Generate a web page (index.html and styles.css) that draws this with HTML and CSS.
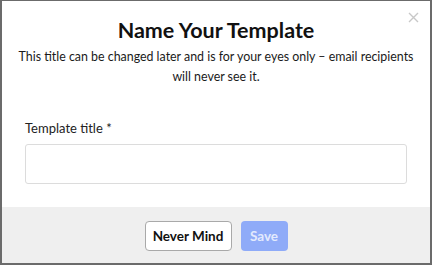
FILE: index.html
```html
<!DOCTYPE html>
<html lang="en">
<head>
    <meta charset="UTF-8">
    <meta name="viewport" content="width=device-width, initial-scale=1.0">
    <title>Name Your Template</title>
    <link rel="stylesheet" href="styles.css">
</head>
<body>
    <div class="modal">
        <button class="close-btn" aria-label="Close">
            <svg width="11" height="11" viewBox="0 0 11 11">
                <path d="M1 1 L10 10 M10 1 L1 10" stroke="#c8c8c8" stroke-width="1.4" fill="none"/>
            </svg>
        </button>

        <div class="modal-body">
            <h1>Name Your Template</h1>
            <p class="subtitle">This title can be changed later and is for your eyes only – email recipients will never see it.</p>

            <form class="template-form">
                <label for="templateTitle">Template title *</label>
                <input type="text" id="templateTitle" class="form-control">
            </form>
        </div>

        <div class="modal-footer">
            <button class="btn btn-outline">Never Mind</button>
            <button class="btn btn-primary" disabled>Save</button>
        </div>
    </div>
</body>
</html>
```

FILE: styles.css
```css
/* Template naming modal */
html, body {
    margin: 0;
    padding: 0;
    height: 100%;
}

body {
    font-family: Lato, 'Open Sans', sans-serif;
    color: #111;
    background-color: #6b6b6b;
}

.modal {
    position: relative;
    box-sizing: border-box;
    height: 265px;
    margin-left: 2px;
    margin-right: 2px;
    padding-top: 1px;
    display: flex;
    flex-direction: column;
}

.modal-body {
    background-color: white;
    padding: 14px 12px 23px;
    text-align: center;
}

.close-btn {
    position: absolute;
    top: 12px;
    right: 11px;
    padding: 0;
    border: none;
    background: none;
    cursor: pointer;
    line-height: 0;
}

h1 {
    margin: 0;
    font-size: 21.5px;
    line-height: 30px;
    font-weight: 700;
    color: #111;
}

.subtitle {
    margin: 2px 0 0;
    font-size: 12.4px;
    line-height: 20px;
    color: #1a1a1a;
}

.template-form {
    margin: 33px 11px 0;
    text-align: left;
}

.template-form label {
    display: block;
    font-size: 13px;
    line-height: 16px;
    margin-bottom: 8px;
    color: #222;
}

.form-control {
    display: block;
    width: 100%;
    height: 40px;
    box-sizing: border-box;
    border: 1px solid #dcdcdc;
    border-radius: 3px;
    font-size: 14px;
    padding: 0 10px;
    margin: 0;
}

.modal-footer {
    flex: 1;
    margin-bottom: 2px;
    background-color: #efefef;
    display: flex;
    justify-content: center;
    align-items: flex-start;
    gap: 9px;
    padding-top: 14px;
}

.btn {
    height: 30px;
    box-sizing: border-box;
    border-radius: 4px;
    font-family: Lato, 'Open Sans', sans-serif;
    font-size: 13.5px;
    font-weight: 700;
    cursor: pointer;
}

.btn-outline {
    width: 87px;
    background-color: white;
    border: 1px solid #a9a9a9;
    color: #111;
}

.btn-primary {
    width: 47px;
    background-color: #8fabf8;
    border: none;
    color: #e3eafd;
}
```
